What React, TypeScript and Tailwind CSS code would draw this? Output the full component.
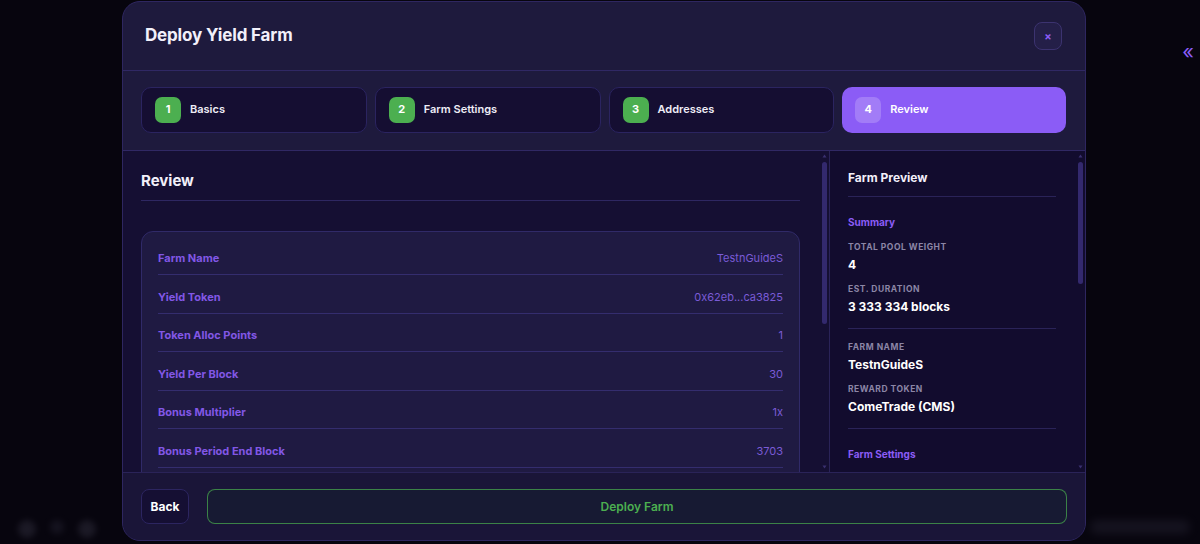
import React from "react";

const font = { fontFamily: "Inter, 'Noto Sans', sans-serif" };

const steps = [
  { n: 1, label: "Basics", done: true },
  { n: 2, label: "Farm Settings", done: true },
  { n: 3, label: "Addresses", done: true },
  { n: 4, label: "Review", done: false },
];

const rows = [
  ["Farm Name", "TestnGuideS"],
  ["Yield Token", "0x62eb...ca3825"],
  ["Token Alloc Points", "1"],
  ["Yield Per Block", "30"],
  ["Bonus Multiplier", "1x"],
  ["Bonus Period End Block", "3703"],
];

function Stat({ label, value, first }: { label: string; value: string; first?: boolean }) {
  return (
    <div className={first ? "mt-[12px]" : "mt-[10px]"}>
      <div className="text-[8.5px] font-bold uppercase leading-[12px] tracking-[0.06em] text-[#8c86a6]">{label}</div>
      <div className="mt-[4px] text-[12px] font-bold leading-[16px] text-white">{value}</div>
    </div>
  );
}

// thin scrollbar column drawn beside the scrolling content
function ScrollBar({ thumb }: { thumb: string }) {
  return (
    <div className="flex w-[10px] shrink-0 flex-col items-center py-[3px]">
      <svg width="5" height="4" viewBox="0 0 5 4" className="shrink-0">
        <path d="M2.5 0.5 L4.5 3.5 L0.5 3.5 Z" fill="#3a3170" />
      </svg>
      <div className="mt-[2px] flex w-full flex-1 flex-col items-center">
        <div className={`w-[5px] rounded-full bg-[#33296e] ${thumb}`} />
      </div>
      <svg width="5" height="4" viewBox="0 0 5 4" className="shrink-0">
        <path d="M0.5 0.5 L4.5 0.5 L2.5 3.5 Z" fill="#3a3170" />
      </svg>
    </div>
  );
}

export default function App() {
  return (
    <div className="relative h-[544px] w-[1200px] overflow-hidden bg-[#07050e]" style={font}>
      {/* faint background page bits */}
      <div className="absolute right-[6px] top-[42px] text-[20px] leading-none text-[#8b5cf6]">«</div>
      <div className="absolute bottom-[6px] left-[18px] flex gap-[14px] opacity-40 blur-[3px]">
        <div className="h-[18px] w-[18px] rounded-full bg-[#3a3848]" />
        <div className="h-[14px] w-[14px] rounded-full bg-[#2a2838]" />
        <div className="h-[18px] w-[18px] rounded-full bg-[#3a3848]" />
      </div>
      <div className="absolute bottom-[10px] right-[10px] h-[14px] w-[100px] rounded-full bg-[#2a2838] opacity-40 blur-[4px]" />

      <div className="ml-[122px] mt-[1px] flex h-[540px] w-[964px] flex-col overflow-hidden rounded-[18px] border border-[#2e2660] bg-[#1e1a3d]">
        {/* header */}
        <div className="flex h-[69px] shrink-0 items-center justify-between border-b border-[#302864] pl-[22px] pr-[23px]">
          <h1 className="text-[17px] font-bold tracking-[-0.01em] text-[#f2f0fa]">Deploy Yield Farm</h1>
          <button className="flex h-[28px] w-[28px] items-center justify-center rounded-[8px] border border-[#3c3370] bg-[#241f48] text-[11px] font-bold text-[#8b5cf6]">
            ×
          </button>
        </div>

        {/* steps */}
        <div className="flex h-[80px] shrink-0 items-center gap-[8px] border-b border-[#302864] pl-[18px] pr-[19px] pb-[2px]">
          {steps.map((s) =>
            s.done ? (
              <div
                key={s.n}
                className="flex h-[46px] flex-1 items-center gap-[9px] rounded-[10px] border border-[#2b2460] bg-[#150e32] pl-[13px]"
              >
                <span className="flex h-[26px] w-[26px] items-center justify-center rounded-[7px] bg-[#4caf50] text-[11px] font-bold text-white">
                  {s.n}
                </span>
                <span className="text-[11px] font-semibold text-[#eeecf6]">{s.label}</span>
              </div>
            ) : (
              <div
                key={s.n}
                className="flex h-[46px] flex-1 items-center gap-[9px] rounded-[10px] bg-[#8b5cf6] pl-[13px]"
              >
                <span className="flex h-[26px] w-[26px] items-center justify-center rounded-[7px] bg-white/20 text-[11px] font-bold text-white">
                  {s.n}
                </span>
                <span className="text-[11px] font-semibold text-white">{s.label}</span>
              </div>
            )
          )}
        </div>

        {/* body */}
        <div className="flex min-h-0 flex-1">
          <div className="flex w-[707px] shrink-0 border-r border-[#2a2358] bg-[#150f33]">
            <div className="min-w-0 flex-1 overflow-hidden pl-[18px] pr-[19px] pt-[19px]">
              <h2 className="border-b border-[#2e2762] pb-[8px] text-[15px] font-bold leading-[22px] text-[#f2f0fa]">Review</h2>
              <div className="mt-[30px] rounded-[12px] border border-[#302a68] bg-[#1f1a42] px-[16px] pt-[4.5px] pb-[40px]">
                {rows.map(([k, v]) => (
                  <div
                    key={k}
                    className="flex items-center justify-between border-b border-[#342d6e] pt-[15.6px] pb-[9px] text-[11px] leading-[13px]"
                  >
                    <span className="font-bold text-[#8257e6]">{k}</span>
                    <span className="text-[#7a5bd6]">{v}</span>
                  </div>
                ))}
              </div>
            </div>
            <ScrollBar thumb="mt-[2px] h-[162px]" />
          </div>

          <div className="flex flex-1 bg-[#120c2e]">
            <div className="min-w-0 flex-1 overflow-hidden pl-[18px] pr-[19px] pt-[19px]">
              <div className="border-b border-[#2a2358] pb-[10px] text-[12px] font-bold leading-[16px] text-[#f2f0fa]">Farm Preview</div>
              <div className="border-b border-[#2a2358] pb-[13px]">
                <div className="mt-[18px] text-[10px] font-bold leading-[14px] text-[#8b5cf6]">Summary</div>
                <Stat first label="Total Pool Weight" value="4" />
                <Stat label="Est. Duration" value="3 333 334 blocks" />
              </div>
              <div className="border-b border-[#2a2358] pb-[13px]">
                <Stat first label="Farm Name" value="TestnGuideS" />
                <Stat label="Reward Token" value="ComeTrade (CMS)" />
              </div>
              <div className="pb-[40px]">
                <div className="mt-[18px] text-[10px] font-bold leading-[14px] text-[#8b5cf6]">Farm Settings</div>
              </div>
            </div>
            <ScrollBar thumb="mt-[2px] h-[122px]" />
          </div>
        </div>

        {/* footer */}
        <div className="flex h-[68px] shrink-0 items-center gap-[18px] border-t border-[#2a2358] bg-[#1a1538] px-[18px]">
          <button className="h-[35px] w-[48px] rounded-[8px] border border-[#2c2560] bg-[#150f33] text-[12px] font-bold text-white">
            Back
          </button>
          <button className="h-[35px] flex-1 rounded-[8px] border border-[#4caf50]/70 bg-[#171a33] text-[12px] font-semibold text-[#4caf50]">
            Deploy Farm
          </button>
        </div>
      </div>
    </div>
  );
}
